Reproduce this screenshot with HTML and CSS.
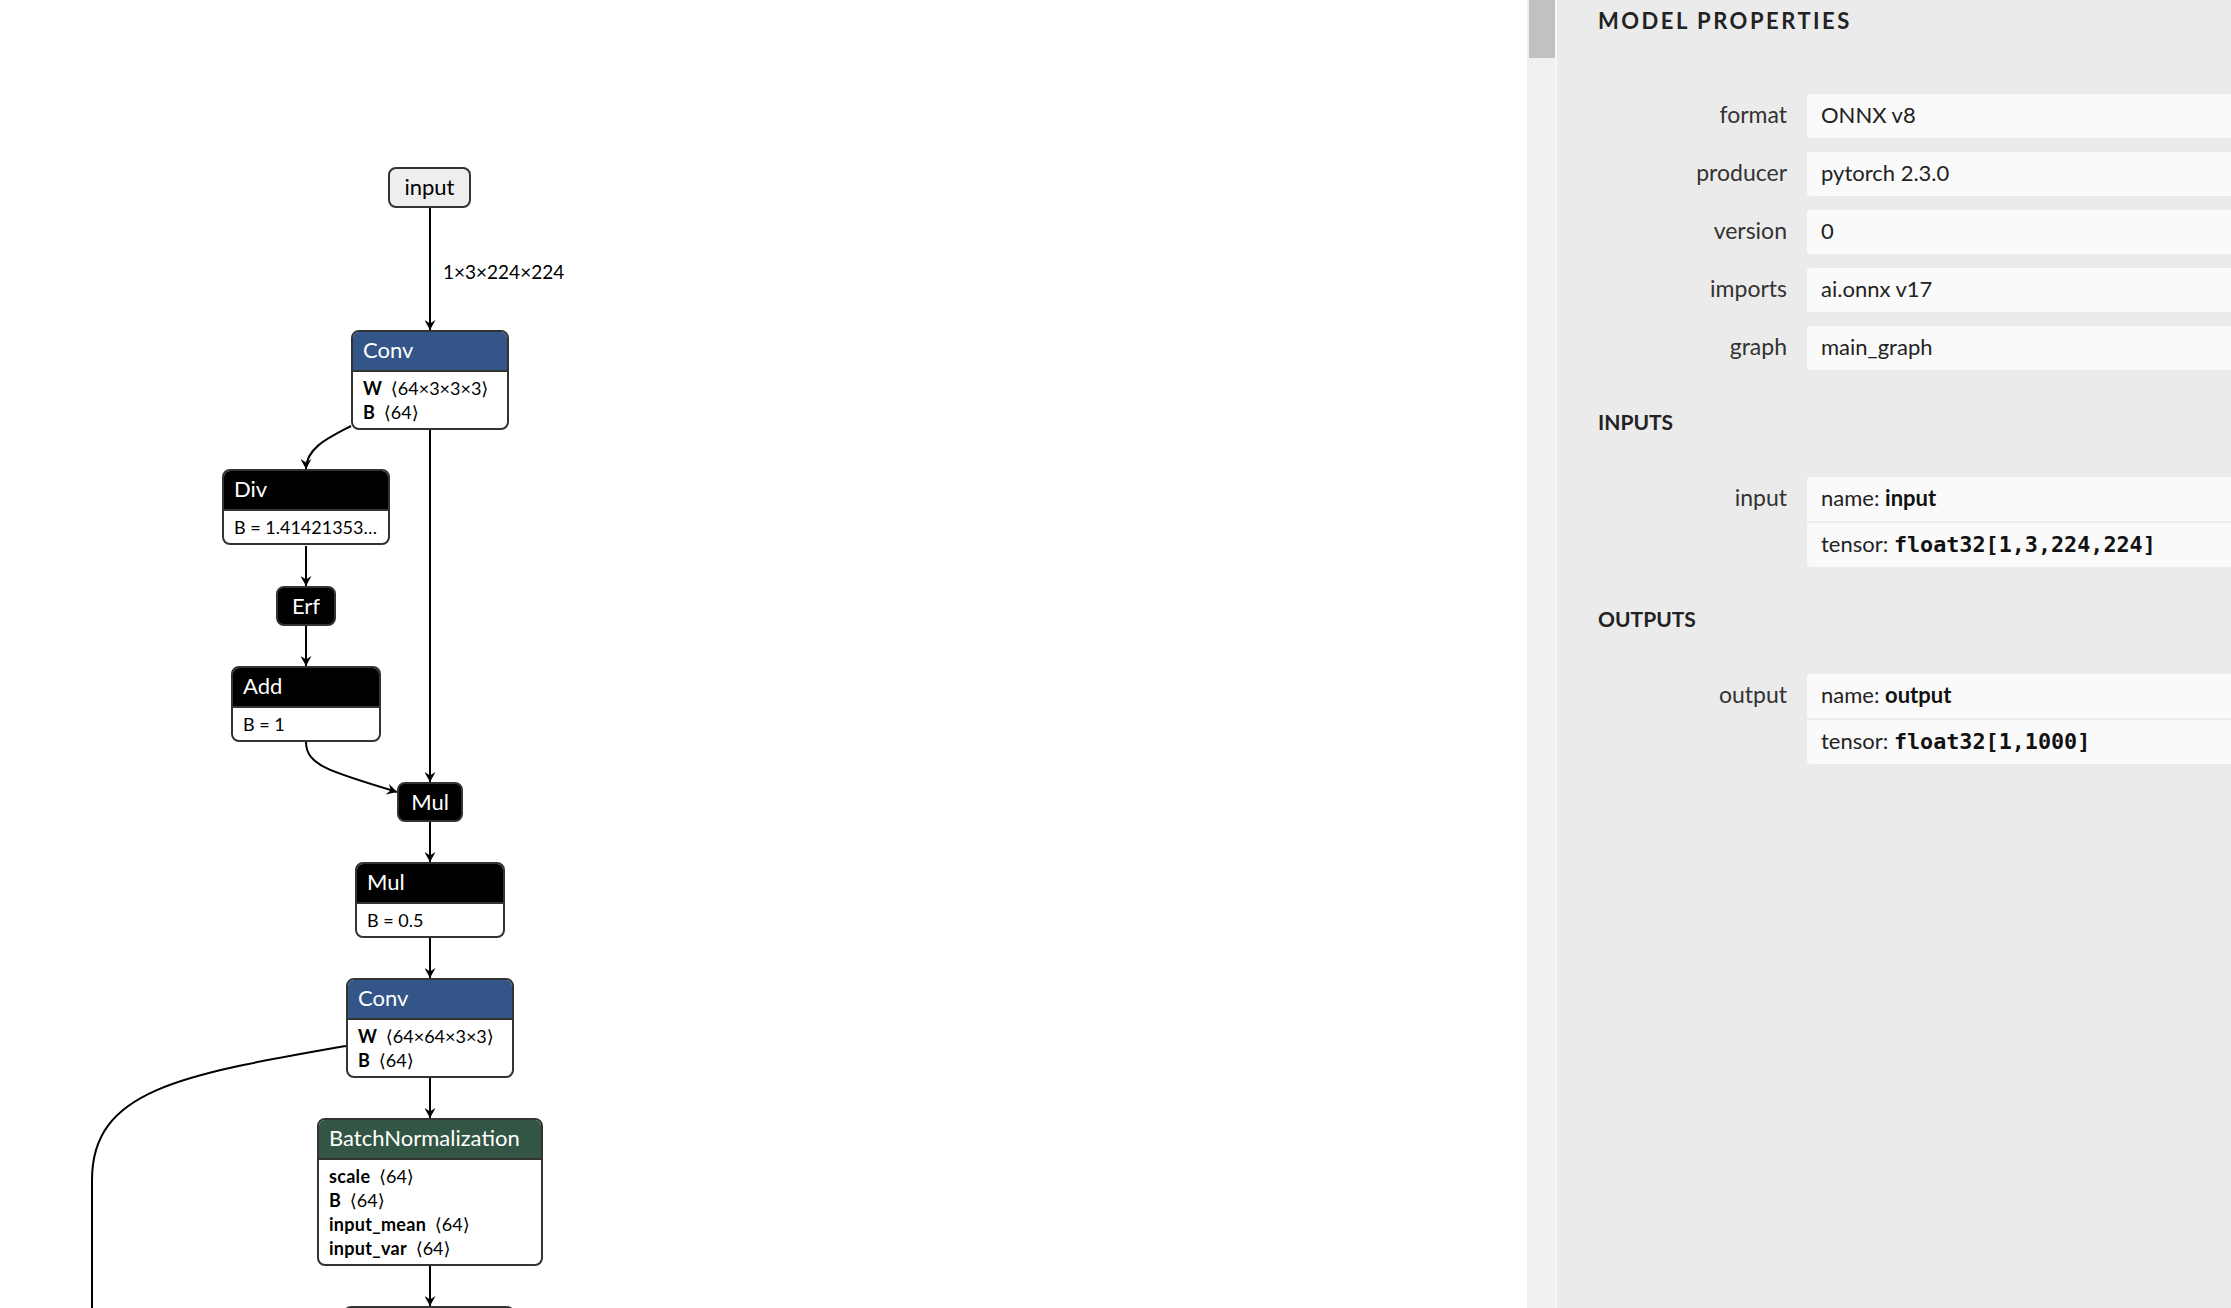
FILE: index.html
```html
<!DOCTYPE html>
<html>
<head>
<meta charset="utf-8">
<title>Model Properties</title>
<link rel="stylesheet" href="styles.css">
</head>
<body>
<div class="app">
  <main class="graph">
    <svg class="edges" width="1527" height="1308" viewBox="0 0 1527 1308">
      <defs>
        <marker id="arrow" viewBox="0 0 10 11" refX="10" refY="5.5" markerWidth="10" markerHeight="11" markerUnits="userSpaceOnUse" orient="auto">
          <path d="M0,0 L10,5.5 L0,11 L3.5,5.5 Z" fill="#000"/>
        </marker>
      </defs>
      <path class="edge" d="M430,208 L430,330" marker-end="url(#arrow)"/>
      <path class="edge" d="M351,426 C328,438 306,448 306,469" marker-end="url(#arrow)"/>
      <path class="edge" d="M430,430 L430,782" marker-end="url(#arrow)"/>
      <path class="edge" d="M306,546 L306,586" marker-end="url(#arrow)"/>
      <path class="edge" d="M306,626 L306,666" marker-end="url(#arrow)"/>
      <path class="edge" d="M306,742 C306,765 330,772 397,792" marker-end="url(#arrow)"/>
      <path class="edge" d="M430,822 L430,862" marker-end="url(#arrow)"/>
      <path class="edge" d="M430,938 L430,978" marker-end="url(#arrow)"/>
      <path class="edge" d="M430,1078 L430,1118" marker-end="url(#arrow)"/>
      <path class="edge" d="M430,1266 L430,1306" marker-end="url(#arrow)"/>
      <path class="edge" d="M346,1046 C180,1075 92,1090 92,1180 L92,1320"/>
    </svg>

    <div class="edge-label">1×3×224×224</div>

    <div class="node n-input io">input</div>

    <div class="node n-conv1">
      <div class="node-head layer">Conv</div>
      <div class="node-body">
        <div class="attr"><b>W</b> ⟨64×3×3×3⟩</div>
        <div class="attr"><b>B</b> ⟨64⟩</div>
      </div>
    </div>

    <div class="node n-div">
      <div class="node-head">Div</div>
      <div class="node-body">
        <div class="attr">B = 1.41421353…</div>
      </div>
    </div>

    <div class="node n-erf small">Erf</div>

    <div class="node n-add">
      <div class="node-head">Add</div>
      <div class="node-body">
        <div class="attr">B = 1</div>
      </div>
    </div>

    <div class="node n-mul small">Mul</div>

    <div class="node n-mul2">
      <div class="node-head">Mul</div>
      <div class="node-body">
        <div class="attr">B = 0.5</div>
      </div>
    </div>

    <div class="node n-conv2">
      <div class="node-head layer">Conv</div>
      <div class="node-body">
        <div class="attr"><b>W</b> ⟨64×64×3×3⟩</div>
        <div class="attr"><b>B</b> ⟨64⟩</div>
      </div>
    </div>

    <div class="node n-bn">
      <div class="node-head norm">BatchNormalization</div>
      <div class="node-body">
        <div class="attr"><b>scale</b> ⟨64⟩</div>
        <div class="attr"><b>B</b> ⟨64⟩</div>
        <div class="attr"><b>input_mean</b> ⟨64⟩</div>
        <div class="attr"><b>input_var</b> ⟨64⟩</div>
      </div>
    </div>

    <div class="node n-conv3">
      <div class="node-head layer"></div>
    </div>
  </main>

  <aside class="sidebar">
    <div class="scrollbar"><div class="thumb"></div></div>
    <div class="panel">
      <h1 class="sidebar-title">Model Properties</h1>
      <div class="props">
        <div class="prop"><div class="label">format</div><div class="value"><div class="line">ONNX v8</div></div></div>
        <div class="prop"><div class="label">producer</div><div class="value"><div class="line">pytorch 2.3.0</div></div></div>
        <div class="prop"><div class="label">version</div><div class="value"><div class="line">0</div></div></div>
        <div class="prop"><div class="label">imports</div><div class="value"><div class="line">ai.onnx v17</div></div></div>
        <div class="prop"><div class="label">graph</div><div class="value"><div class="line">main_graph</div></div></div>
      </div>

      <h2 class="section-title">Inputs</h2>
      <div class="props">
        <div class="prop"><div class="label">input</div><div class="value"><div class="line">name: <b>input</b></div><div class="line">tensor: <code>float32[1,3,224,224]</code></div></div></div>
      </div>

      <h2 class="section-title">Outputs</h2>
      <div class="props">
        <div class="prop"><div class="label">output</div><div class="value"><div class="line">name: <b>output</b></div><div class="line">tensor: <code>float32[1,1000]</code></div></div></div>
      </div>
    </div>
  </aside>
</div>
</body>
</html>
```

FILE: styles.css
```css
html, body {
  margin: 0;
  padding: 0;
  height: 100%;
  overflow: hidden;
  background: #fff;
}

.app {
  display: flex;
  width: 2231px;
  height: 1308px;
  font-family: Lato, "Noto Sans", "DejaVu Sans", sans-serif;
}

/* ---------- graph canvas ---------- */
.graph {
  position: relative;
  width: 1527px;
  flex: none;
  height: 100%;
  overflow: hidden;
  background: #fff;
}

.edges {
  position: absolute;
  left: 0;
  top: 0;
}

.edge {
  fill: none;
  stroke: #000;
  stroke-width: 2;
}

.edge-label {
  position: absolute;
  left: 443px;
  top: 259px;
  font-size: 19px;
  line-height: 26px;
  color: #000;
  white-space: nowrap;
}

.node {
  position: absolute;
  box-sizing: border-box;
  border: 2px solid #333;
  border-radius: 8px;
  overflow: hidden;
  background: #fff;
  color: #000;
}

.node-head {
  height: 38px;
  line-height: 36px;
  padding: 0 10px;
  background: #000;
  color: #fff;
  font-size: 22px;
  border-bottom: 2px solid #333;
  white-space: nowrap;
}

.node-head.layer { background: #335588; }
.node-head.norm { background: #335544; }

.node-body {
  padding: 4px 10px;
}

.attr {
  height: 24px;
  line-height: 24px;
  font-size: 18px;
  white-space: nowrap;
}

.attr b { font-weight: 700; margin-right: 4px; letter-spacing: 0.3px; }

.node.io {
  background: #eeeeee;
  text-align: center;
  font-size: 22px;
  line-height: 36px;
}

.node.small {
  background: #000;
  color: #fff;
  text-align: center;
  font-size: 22px;
  line-height: 35px;
}

.n-input { left: 388px; top: 167px; width: 83px; height: 41px; }
.n-conv1 { left: 351px; top: 330px; width: 158px; }
.n-div   { left: 222px; top: 469px; width: 168px; }
.n-erf   { left: 276px; top: 586px; width: 60px; height: 40px; }
.n-add   { left: 231px; top: 666px; width: 150px; }
.n-mul   { left: 397px; top: 782px; width: 66px; height: 40px; }
.n-mul2  { left: 355px; top: 862px; width: 150px; }
.n-conv2 { left: 346px; top: 978px; width: 168px; }
.n-bn    { left: 317px; top: 1118px; width: 226px; }
.n-conv3 { left: 343px; top: 1306px; width: 172px; height: 60px; }

/* ---------- sidebar ---------- */
.sidebar {
  flex: 1;
  display: flex;
  height: 100%;
  background: #ebebeb;
}

.scrollbar {
  width: 28px;
  flex: none;
  background: #f0f0f0;
  border-right: 2px solid #f7f7f7;
}

.thumb {
  margin-left: 2px;
  width: 26px;
  height: 58px;
  background: #c1c1c1;
}

.panel {
  flex: 1;
  padding-left: 41px;
  color: #333;
  font-size: 22px;
}

.sidebar-title {
  margin: 0 0 52px;
  height: 42px;
  line-height: 42px;
  font-size: 22px;
  font-weight: 700;
  text-transform: uppercase;
  letter-spacing: 2.5px;
  color: #222;
}

.section-title {
  margin: 31px 0 34px;
  height: 42px;
  line-height: 42px;
  font-size: 21px;
  font-weight: 700;
  text-transform: uppercase;
  color: #222;
}

.props {
  display: flex;
  flex-direction: column;
  gap: 14px;
}

.prop {
  display: grid;
  grid-template-columns: 189px 1fr;
  column-gap: 20px;
}

.label {
  text-align: right;
  line-height: 30px;
  padding-top: 5px;
  font-size: 23px;
  color: #333;
}

.value {
  background: #fafafa;
  border-radius: 3px 0 0 3px;
  color: #222;
}

.line {
  height: 44px;
  box-sizing: border-box;
  line-height: 30px;
  padding: 6px 14px 8px;
  white-space: nowrap;
}

.line + .line {
  border-top: 2px solid #ececec;
  height: 46px;
}

.line b { font-weight: 700; color: #111; }

.line code {
  font-family: "DejaVu Sans Mono", "Liberation Mono", monospace;
  font-weight: 700;
  font-size: 21.75px;
  color: #111;
}
```
